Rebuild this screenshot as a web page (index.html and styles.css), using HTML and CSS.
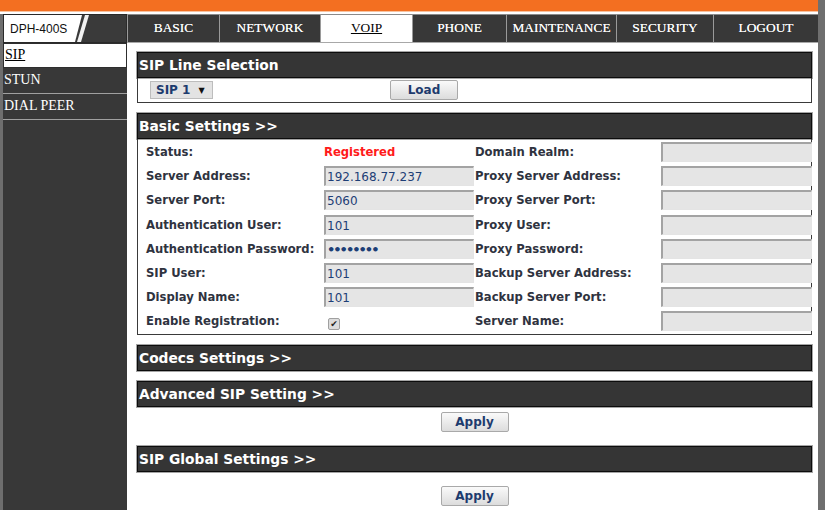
FILE: index.html
```html
<!DOCTYPE html>
<html>
<head>
<meta charset="utf-8">
<title>DPH-400S VOIP</title>
<link rel="stylesheet" href="styles.css">
</head>
<body>
<div class="window">
  <div class="screen">
    <div class="topbar"></div>
    <div class="frame">
      <div class="nav">
        <div class="logo">
          <span class="logo-plate">DPH-400S</span>
          <span class="logo-stripe"></span>
        </div>
        <ul class="tabs">
          <li class="tab">BASIC</li>
          <li class="tab">NETWORK</li>
          <li class="tab active"><a>VOIP</a></li>
          <li class="tab">PHONE</li>
          <li class="tab">MAINTENANCE</li>
          <li class="tab">SECURITY</li>
          <li class="tab">LOGOUT</li>
        </ul>
      </div>
      <div class="body">
        <aside class="side">
          <a class="side-item active">SIP</a>
          <a class="side-item">STUN</a>
          <a class="side-item">DIAL PEER</a>
        </aside>
        <main class="content">
          <section class="panel">
            <div class="panel-head">SIP Line Selection</div>
            <div class="panel-body line-sel">
              <span class="select">SIP 1 <span class="caret">▼</span></span>
              <button class="btn load">Load</button>
            </div>
          </section>

          <section class="panel">
            <div class="panel-head">Basic Settings &gt;&gt;</div>
            <div class="panel-body grid">
              <div class="lbl">Status:</div>
              <div class="status">Registered</div>
              <div class="lbl">Domain Realm:</div>
              <div><input class="field wide" type="text" readonly value=""></div>

              <div class="lbl">Server Address:</div>
              <div><input class="field" type="text" readonly value="192.168.77.237"></div>
              <div class="lbl">Proxy Server Address:</div>
              <div><input class="field wide" type="text" readonly value=""></div>

              <div class="lbl">Server Port:</div>
              <div><input class="field" type="text" readonly value="5060"></div>
              <div class="lbl">Proxy Server Port:</div>
              <div><input class="field wide" type="text" readonly value=""></div>

              <div class="lbl">Authentication User:</div>
              <div><input class="field" type="text" readonly value="101"></div>
              <div class="lbl">Proxy User:</div>
              <div><input class="field wide" type="text" readonly value=""></div>

              <div class="lbl">Authentication Password:</div>
              <div><input class="field pw" type="password" readonly value="12345678"></div>
              <div class="lbl">Proxy Password:</div>
              <div><input class="field wide" type="password" readonly value=""></div>

              <div class="lbl">SIP User:</div>
              <div><input class="field" type="text" readonly value="101"></div>
              <div class="lbl">Backup Server Address:</div>
              <div><input class="field wide" type="text" readonly value=""></div>

              <div class="lbl">Display Name:</div>
              <div><input class="field" type="text" readonly value="101"></div>
              <div class="lbl">Backup Server Port:</div>
              <div><input class="field wide" type="text" readonly value=""></div>

              <div class="lbl">Enable Registration:</div>
              <div><span class="check">✔</span></div>
              <div class="lbl">Server Name:</div>
              <div><input class="field wide" type="text" readonly value=""></div>
            </div>
          </section>

          <section class="panel">
            <div class="panel-head">Codecs Settings &gt;&gt;</div>
          </section>

          <section class="panel">
            <div class="panel-head">Advanced SIP Setting &gt;&gt;</div>
          </section>
          <div class="actions"><button class="btn">Apply</button></div>

          <section class="panel">
            <div class="panel-head">SIP Global Settings &gt;&gt;</div>
          </section>
          <div class="actions last"><button class="btn">Apply</button></div>
        </main>
      </div>
    </div>
  </div>
  <div class="scroll"></div>
</div>
</body>
</html>
```

FILE: styles.css
```css
html, body {
  margin: 0;
  padding: 0;
  height: 100%;
  overflow: hidden;
  background: #fff;
}

.window {
  display: flex;
  width: 825px;
  height: 510px;
}

.screen {
  flex: 1;
  display: flex;
  flex-direction: column;
  background: #fff;
  min-width: 0;
}

.scroll {
  width: 7px;
  background: #6f6f6f;
}

.topbar {
  height: 11px;
  background: #f36f21;
  border-bottom: 1px solid #f9c3a0;
}

.frame {
  flex: 1;
  display: flex;
  flex-direction: column;
  margin-top: 2px;
  border-left: 3px solid #6e6e6e;
  min-height: 0;
}

/* ---------- top navigation ---------- */
.nav {
  display: flex;
  height: 29px;
  box-sizing: border-box;
}

.logo {
  width: 124px;
  flex: none;
  box-sizing: border-box;
  display: flex;
  background: #3a3a3a;
  border: 1px solid #2a2a2a;
}

.logo-plate {
  width: 78px;
  flex: none;
  box-sizing: border-box;
  background: #fff;
  padding-left: 6px;
  font: 12px "Liberation Sans", Arial, sans-serif;
  color: #111;
  display: flex;
  align-items: center;
  clip-path: polygon(0 0, 100% 0, calc(100% - 7px) 100%, 0 100%);
}

.logo-stripe {
  width: 12px;
  flex: none;
  margin-left: -5px;
  background: #f2f2f2;
  clip-path: polygon(8px 0, 12px 0, 4px 100%, 0 100%);
}

.tabs {
  list-style: none;
  margin: 0;
  padding: 0;
  flex: 1;
  display: grid;
  grid-template-columns: 92px 101px 92px 94px 110px 97px 1fr;
  border-bottom: 1px solid #a8a8a8;
}

.tab {
  background: #383838;
  color: #fff;
  border-top: 1px solid #8a8a8a;
  border-left: 1px solid #9a9a9a;
  font: 13.4px "Liberation Serif", "Times New Roman", serif;
  display: flex;
  align-items: center;
  justify-content: center;
  padding-bottom: 2px;
  text-shadow: 0 0 0.3px rgba(255, 255, 255, 0.8);
}

.tab.active {
  background: #fff;
  color: #000;
  text-shadow: none;
}

.tab.active a {
  text-decoration: underline;
}

/* ---------- body ---------- */
.body {
  flex: 1;
  display: flex;
  min-height: 0;
}

.side {
  width: 124px;
  flex: none;
  background: #383838;
  display: flex;
  flex-direction: column;
}

.side-item {
  display: block;
  height: 25px;
  border-bottom: 1px solid #a0a0a0;
  color: #fff;
  font: 14px/24px "Liberation Serif", "Times New Roman", serif;
  padding-left: 1px;
}

.side-item.active {
  background: #fff;
  color: #000;
  text-decoration: underline;
  box-sizing: border-box;
  border: 1px solid #2e2e2e;
  line-height: 22px;
}

.content {
  flex: 1;
  min-width: 0;
  background: #fff;
  padding: 9px 6px 0 10px;
  font-family: "DejaVu Sans", Verdana, sans-serif;
}

.panel {
  margin-bottom: 10px;
}

.panel-head {
  height: 26px;
  box-sizing: border-box;
  background: #353535;
  border: 1px solid #0c0c0c;
  box-shadow: 0 0 0 1px #a5a5a5;
  color: #fff;
  font: bold 13.8px "DejaVu Sans", Verdana, sans-serif;
  display: flex;
  align-items: center;
  padding-left: 1px;
}

.panel-body {
  border: 1px solid #3a3a3a;
  border-top: none;
}

.line-sel {
  height: 25px;
  box-sizing: border-box;
  display: flex;
  align-items: center;
  padding-left: 12px;
}

.select {
  width: 63px;
  height: 18px;
  box-sizing: border-box;
  background: #e3e3e3;
  border: 1px solid #bdbdbd;
  color: #1d3b6e;
  font: bold 12px "DejaVu Sans", Verdana, sans-serif;
  display: flex;
  align-items: center;
  padding-left: 5px;
  gap: 8px;
}

.caret {
  font-size: 8px;
  color: #111;
}

.btn {
  width: 68px;
  height: 20px;
  box-sizing: border-box;
  border: 1px solid #a9a9a9;
  border-radius: 2px;
  background: linear-gradient(#fafafa, #dcdcdc);
  color: #1d3b6e;
  font: bold 12px "DejaVu Sans", Verdana, sans-serif;
  padding: 0;
  margin: 0;
}

.load {
  margin-left: 177px;
}

.grid {
  display: grid;
  grid-template-columns: 178px 151px 186px 1fr;
  grid-auto-rows: 24.2px;
  align-items: center;
  padding: 1px 0 0 8px;
}

.lbl {
  font: bold 11.6px "DejaVu Sans", Verdana, sans-serif;
  color: #2f3340;
}

.status {
  font: bold 11.6px "DejaVu Sans", Verdana, sans-serif;
  color: #ff1a1a;
}

.field {
  display: block;
  width: 150px;
  height: 20px;
  box-sizing: border-box;
  margin: 0;
  padding: 1px 0 0 1px;
  background: #e5e5e5;
  border-style: solid;
  border-width: 2px 1px 1px 2px;
  border-color: #a3a3a3 #e4e4e4 #e4e4e4 #a3a3a3;
  color: #1d3e76;
  font: 12px "DejaVu Sans", Verdana, sans-serif;
  outline: none;
}

.field.wide {
  width: 151px;
}

.pw {
  font-size: 13px;
  font-weight: bold;
  letter-spacing: -2px;
}

.check {
  display: inline-flex;
  width: 12px;
  height: 12px;
  box-sizing: border-box;
  margin-left: 4px;
  margin-top: 2px;
  background: #dcdcdc;
  border: 1px solid #a0a0a0;
  border-radius: 2px;
  align-items: center;
  justify-content: center;
  font: 9px "DejaVu Sans", sans-serif;
  color: #222;
}

.actions {
  display: flex;
  justify-content: center;
  margin-top: -5px;
  margin-bottom: 14px;
}

.actions.last {
  margin-top: 14px;
}
```
